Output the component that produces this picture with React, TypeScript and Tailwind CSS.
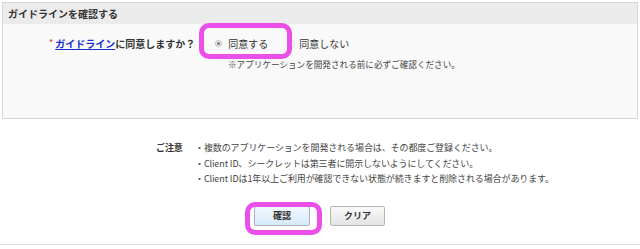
import React from "react";

const jp = { fontFamily: '"Noto Sans CJK JP", "Liberation Sans", sans-serif' };

export default function App() {
  return (
    <div className="w-[640px] h-[249px] bg-white relative overflow-hidden text-[#333]" style={jp}>
      {/* guideline panel */}
      <div className="mx-[2px] mt-[2px] h-[117px] border border-[#d6d6d6] bg-[#f9f9f9]">
        <div className="h-[21px] bg-[#ebebeb] flex items-center pl-[5px] text-[10px] font-bold text-[#333]">
          ガイドラインを確認する
        </div>
        <div className="flex items-center h-[38px] pl-[46px] text-[10px]">
          <span className="text-[#e0332f] text-[9px] mr-[2px]">*</span>
          <span className="font-bold">
            <span className="text-[#1a2fc9] underline">ガイドライン</span>に同意しますか？
          </span>
          <span className="ml-[20px] flex items-center">
            <span className="w-[7px] h-[7px] rounded-full border border-[#b9b9b9] bg-[#f1f1f1] flex items-center justify-center">
              <span className="w-[3px] h-[3px] rounded-full bg-[#777]" />
            </span>
            <span className="ml-[6px]">同意する</span>
          </span>
          <span className="ml-[22px] flex items-center">
            <span className="w-[5px] h-[7px] rounded-r-full border-y border-r border-[#e6e6e6] bg-[#f7f7f7]" />
            <span className="ml-[4px]">同意しない</span>
          </span>
        </div>
        <div className="pl-[225px] text-[8.6px] text-[#444] leading-none -mt-[2px]">
          ※アプリケーションを開発される前に必ずご確認ください。
        </div>
      </div>

      {/* highlight around the agree option */}
      <div className="absolute left-[199px] top-[23px] w-[93px] h-[36px] border-[5px] border-[#ea4fea] rounded-[10px]" />

      {/* notes */}
      <div className="flex mt-[21px] pl-[156px] text-[9px] tracking-[-0.1px] leading-[15.5px]">
        <div className="w-[39px] font-bold">ご注意</div>
        <div className="text-[#444]">
          <div>・複数のアプリケーションを開発される場合は、その都度ご登録ください。</div>
          <div>・Client ID、シークレットは第三者に開示しないようにしてください。</div>
          <div>・Client IDは1年以上ご利用が確認できない状態が続きますと削除される場合があります。</div>
        </div>
      </div>

      {/* buttons */}
      <div className="flex gap-[20px] pl-[254px] mt-[19px]">
        <button className="w-[56px] h-[20px] border border-[#a9b3bd] rounded-[2px] bg-gradient-to-b from-[#f2f8fe] to-[#d6e9f9] text-[9px] font-bold text-[#333]">
          確認
        </button>
        <button className="w-[55px] h-[20px] border border-[#b5b5b5] rounded-[2px] bg-gradient-to-b from-[#fafafa] to-[#e3e3e3] text-[9px] font-bold text-[#333]">
          クリア
        </button>
      </div>

      <div className="absolute left-[245px] top-[202px] w-[77px] h-[33px] border-[5px] border-[#ea4fea] rounded-[10px]" />

      <div className="absolute left-0 right-0 top-[244px] h-px bg-[#d9d9d9]" />
    </div>
  );
}
